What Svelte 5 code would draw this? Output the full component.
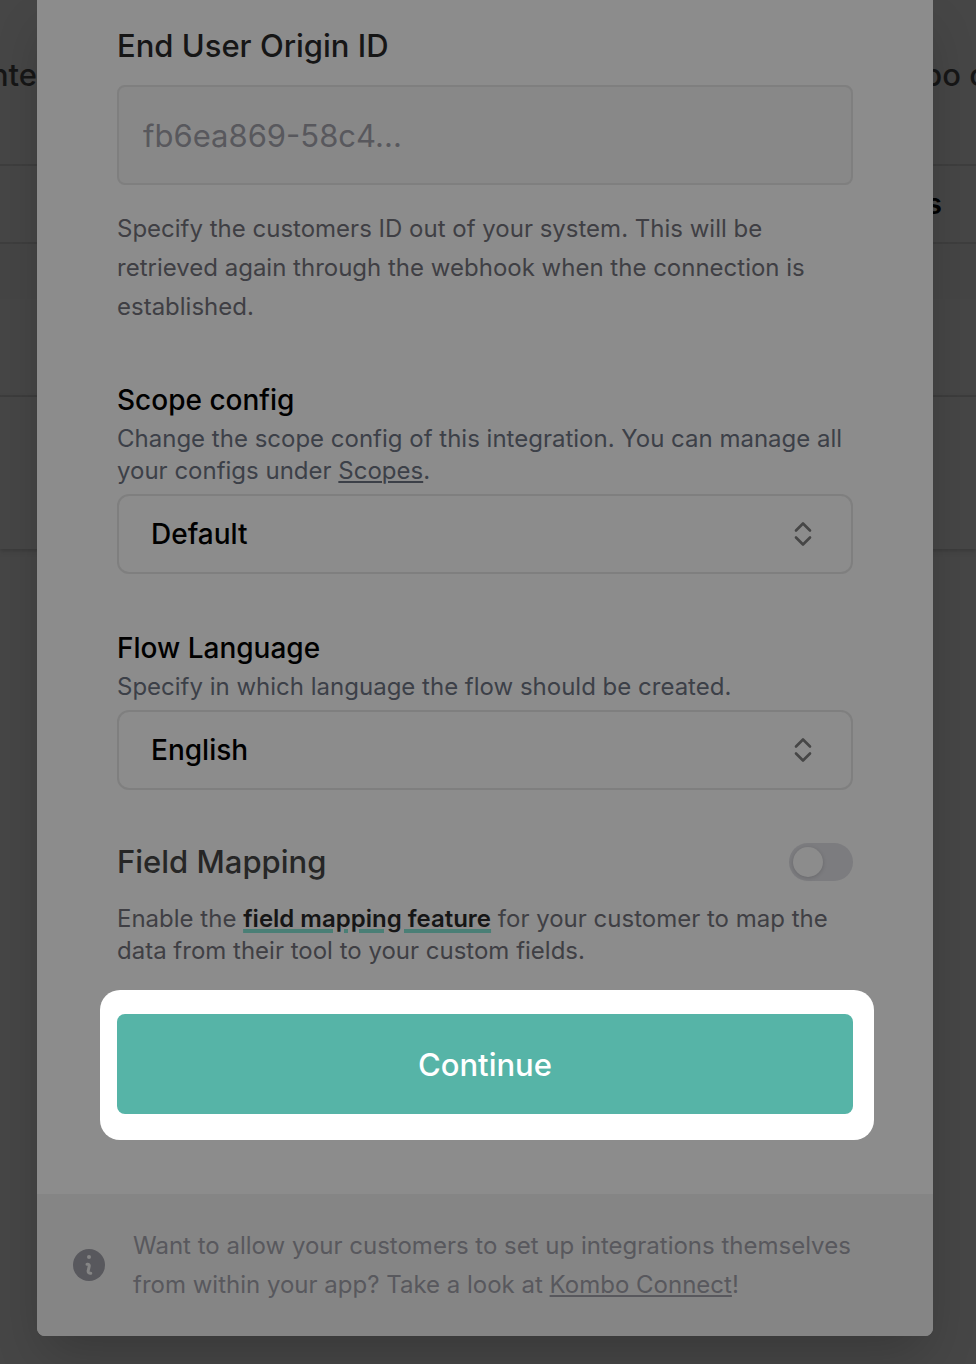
<script>
	let originId = $state('');
	let scope = $state('Default');
	let language = $state('English');
	let fieldMapping = $state(false);
</script>

{#snippet chevrons()}
	<svg class="chevrons" viewBox="0 0 20 28" aria-hidden="true">
		<path d="M3 10.5 10 3.5l7 7M3 17.5l7 7 7-7" />
	</svg>
{/snippet}

<div class="page">
	<div class="backdrop" aria-hidden="true">
		<div class="bg-title">
			<span>nte</span>
			<span>bo c</span>
		</div>
		<div class="bg-head">s</div>
		<div class="bg-band"></div>
		<div class="bg-row"></div>
		<div class="bg-row last"></div>
	</div>

	<div class="overlay">
		<div class="modal" role="dialog" aria-label="Create link">
			<form class="body" onsubmit={(e) => e.preventDefault()}>
				<section class="origin">
					<label class="title" for="origin-id">End User Origin ID</label>
					<input id="origin-id" class="text-input" type="text" placeholder="fb6ea869-58c4..." bind:value={originId} />
					<p class="help tall">
						Specify the customers ID out of your system. This will be<br />
						retrieved again through the webhook when the connection is<br />
						established.
					</p>
				</section>

				<section class="picker">
					<label class="label" for="scope">Scope config</label>
					<p class="help cool">
						Change the scope config of this integration. You can manage all<br />
						your configs under <a href="#scopes">Scopes</a>.
					</p>
					<div class="select">
						<select id="scope" bind:value={scope}>
							<option>Default</option>
						</select>
						{@render chevrons()}
					</div>
				</section>

				<section class="picker">
					<label class="label" for="language">Flow Language</label>
					<p class="help cool">Specify in which language the flow should be created.</p>
					<div class="select">
						<select id="language" bind:value={language}>
							<option>English</option>
						</select>
						{@render chevrons()}
					</div>
				</section>

				<section class="mapping">
					<div class="mapping-row">
						<label class="title soft" for="mapping">Field Mapping</label>
						<input id="mapping" class="toggle" type="checkbox" role="switch" bind:checked={fieldMapping} />
					</div>
					<p class="help">
						Enable the <a class="feature" href="#field-mapping">field mapping feature</a> for your customer to map the<br />
						data from their tool to your custom fields.
					</p>
				</section>

				<div class="spotlight">
					<button type="submit">Continue</button>
				</div>
			</form>

			<footer>
				<svg class="info" viewBox="0 0 32 32" aria-hidden="true">
					<circle cx="16" cy="16" r="16" />
					<circle class="dot" cx="16" cy="8" r="2" />
					<path d="M14 15.2h.6c1.2 0 1.9 1 1.6 2.1l-1 4.4c-.3 1.3.4 2.5 1.7 2.5h.9" />
				</svg>
				<p class="help tall faint">
					Want to allow your customers to set up integrations themselves<br />
					from within your app? Take a look at <a href="#connect">Kombo Connect</a>!
				</p>
			</footer>
		</div>
	</div>
</div>

<style>
	:global(body) {
		background: #464646;
	}
	.page {
		display: grid;
		min-height: 100vh;
		overflow: hidden;
		font-family: Inter, "Liberation Sans", sans-serif;
		font-optical-sizing: none;
		font-weight: 400;
	}
	.backdrop, .overlay {
		grid-area: 1 / 1;
		min-width: 0;
	}

	/* dimmed table behind the dialog */
	.bg-title {
		display: flex;
		justify-content: space-between;
		height: 164px;
		padding-top: 55px;
		box-sizing: border-box;
		font-size: 31px;
		font-weight: 500;
		line-height: 40px;
		color: #161616;
		white-space: nowrap;
	}
	.bg-title span {
		display: flex;
		justify-content: flex-end;
		width: 37px;
	}
	.bg-title span:last-child {
		justify-content: flex-start;
		width: 53px;
	}
	.bg-head {
		height: 80px;
		box-sizing: border-box;
		border: solid #3e3e3e;
		border-width: 2px 0;
		padding-right: 34px;
		text-align: right;
		font-size: 28px;
		font-weight: 600;
		line-height: 76px;
		color: #000;
	}
	.bg-band {
		height: 55px;
		background: #454545;
	}
	.bg-row {
		height: 96px;
		border-bottom: 2px solid #3e3e3e;
	}
	.bg-row.last {
		height: 152px;
		border-bottom: 0;
		box-shadow: 0 2px 4px #3a3a3a;
	}

	.overlay {
		position: relative;
		padding: 0 43px 28px 37px;
	}
	.modal {
		background: #8c8c8c;
		border-radius: 0 0 8px 8px;
		box-shadow: 0 24px 48px -8px rgba(0, 0, 0, 0.2);
	}
	.body {
		padding: 26px 80px 54px;
	}
	section {
		display: flex;
		flex-direction: column;
	}
	.title {
		font-size: 31px;
		font-weight: 500;
		line-height: 40px;
		color: #161616;
	}
	.title.soft {
		color: #262626;
	}
	.label {
		font-size: 28px;
		font-weight: 500;
		line-height: 40px;
		color: #000;
	}
	.help {
		margin: 0;
		font-size: 24px;
		line-height: 32px;
		color: #3f3f44;
		white-space: nowrap;
	}
	.help.tall {
		line-height: 39px;
	}
	.help.cool {
		color: #3c4048;
	}
	.help.faint {
		color: #58585d;
	}
	a {
		color: inherit;
		text-decoration: underline 2px;
		text-underline-offset: 2px;
	}
	.feature {
		font-weight: 600;
		color: #161616;
		text-decoration: underline 4px #4a7f76;
	}
	.origin .text-input {
		margin: 19px 0 24px;
	}
	.text-input {
		width: 100%;
		height: 100px;
		box-sizing: border-box;
		padding: 0 24px;
		border: 2px solid #7f7f7f;
		border-radius: 8px;
		background: #888;
		font: inherit;
		font-size: 31px;
		color: #161616;
	}
	.text-input::placeholder {
		color: #58585d;
		opacity: 1;
	}
	.picker {
		margin-top: 54px;
	}
	.picker .help {
		margin: 3px 0 7px;
	}
	.select {
		position: relative;
	}
	select {
		display: block;
		appearance: none;
		width: 100%;
		height: 80px;
		box-sizing: border-box;
		padding: 0 32px;
		border: 2px solid #7f7f7f;
		border-radius: 12px;
		background: transparent;
		font: inherit;
		font-size: 28px;
		font-weight: 500;
		color: #000;
	}
	.chevrons {
		position: absolute;
		top: 26px;
		right: 40px;
		width: 20px;
		height: 28px;
		fill: none;
		stroke: #464646;
		stroke-width: 2.6;
		stroke-linecap: round;
		stroke-linejoin: round;
		pointer-events: none;
	}
	.mapping {
		margin-top: 52px;
		gap: 21px;
	}
	.mapping-row {
		display: flex;
		align-items: center;
		justify-content: space-between;
	}
	.toggle {
		appearance: none;
		width: 64px;
		height: 38px;
		margin: 0;
		padding: 4px;
		box-sizing: border-box;
		border-radius: 19px;
		background: #7c7c7f;
	}
	.toggle::before {
		content: "";
		display: block;
		width: 30px;
		height: 30px;
		border-radius: 50%;
		background: #8c8c8c;
		box-shadow: 0 1px 4px rgba(0, 0, 0, 0.16);
	}
	.toggle:checked {
		background: #4a7f76;
	}
	.toggle:checked::before {
		margin-left: auto;
	}
	.spotlight {
		margin: 23px -21px 0 -17px;
		padding: 24px 21px 26px 17px;
		border-radius: 20px;
		background: #fff;
	}
	button {
		display: block;
		width: 100%;
		height: 100px;
		border: 0;
		border-radius: 8px;
		background: #56b4a7;
		font: inherit;
		font-size: 31px;
		font-weight: 500;
		color: #fff;
	}
	footer {
		display: flex;
		align-items: center;
		gap: 28px;
		padding: 32px 36px;
		border-radius: 0 0 8px 8px;
		background: #858585;
	}
	.info {
		flex: none;
		width: 32px;
		height: 32px;
		fill: #58585d;
	}
	.info .dot {
		fill: #858585;
	}
	.info path {
		fill: none;
		stroke: #858585;
		stroke-width: 3;
		stroke-linecap: round;
	}
</style>
